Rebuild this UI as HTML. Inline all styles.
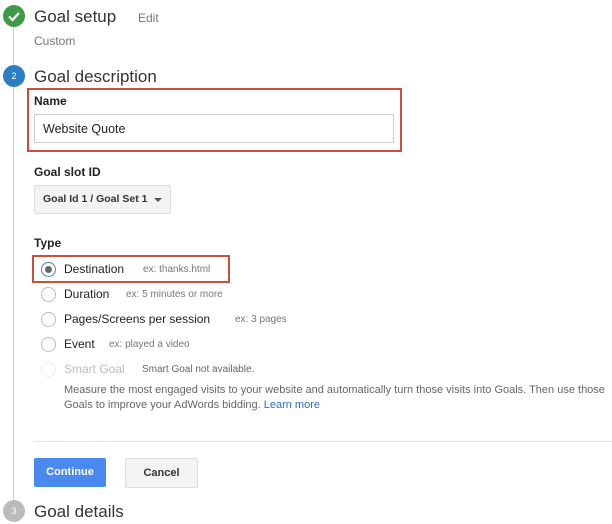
<!DOCTYPE html>
<html><head><style>
body{margin:0;width:612px;height:524px;background:#fff;font-family:"Liberation Sans",Arial,sans-serif;position:relative;overflow:hidden;color:#212121}
.a{position:absolute;white-space:nowrap}
.c{position:absolute;width:22px;height:22px;border-radius:50%;color:#fff;font-size:9px;text-align:center;line-height:22px}
.h{font-size:17px;color:#333}
.lb{font-size:12px;font-weight:bold;color:#222}
.r{position:absolute;width:13px;height:13px;border:1px solid #bbb;border-radius:50%;background:#fff}
.t{font-size:12px;color:#222}
.ex{font-size:10px;color:#777}
</style></head><body>
<div class="a" style="left:13px;top:20px;width:1px;height:490px;background:#ccc"></div>
<div class="c" style="left:3px;top:5px;background:#3e9a46"><svg width="22" height="22" viewBox="0 0 22 22"><path d="M6 11.5l3.5 3.5 6.5-7" stroke="#fff" stroke-width="2.2" fill="none"/></svg></div>
<div class="a h" style="left:34px;top:7px">Goal setup</div>
<div class="a" style="left:138px;top:11px;font-size:12px;color:#777">Edit</div>
<div class="a" style="left:34px;top:34px;font-size:12px;color:#777">Custom</div>
<div class="c" style="left:3px;top:65px;background:#2a7ec1">2</div>
<div class="a h" style="left:34px;top:67px">Goal description</div>
<div class="a" style="left:27px;top:88px;width:371px;height:60px;border:2px solid #c9503a"></div>
<div class="a lb" style="left:34px;top:94px">Name</div>
<div class="a" style="left:34px;top:114px;width:358px;height:27px;border:1px solid #ccc"></div>
<div class="a t" style="left:43px;top:122px;font-size:12.5px">Website Quote</div>
<div class="a lb" style="left:34px;top:165px">Goal slot ID</div>
<div class="a" style="left:34px;top:185px;width:135px;height:27px;border:1px solid #ddd;background:#f3f3f3;border-radius:2px"></div>
<div class="a" style="left:43px;top:193px;font-size:10.5px;font-weight:bold;color:#333">Goal Id 1 / Goal Set 1</div>
<div class="a" style="left:154px;top:198px;width:0;height:0;border-left:4px solid transparent;border-right:4px solid transparent;border-top:4px solid #555"></div>
<div class="a lb" style="left:34px;top:236px">Type</div>
<div class="a" style="left:32px;top:255px;width:194px;height:24px;border:2px solid #c9503a"></div>
<div class="r" style="left:41px;top:262px;border-color:#4a7fc7"><div style="position:absolute;left:3px;top:3px;width:7px;height:7px;border-radius:50%;background:#666"></div></div>
<div class="a t" style="left:64px;top:262px">Destination</div><div class="a ex" style="left:143px;top:264px">ex: thanks.html</div>
<div class="r" style="left:41px;top:287px"></div>
<div class="a t" style="left:64px;top:287px">Duration</div><div class="a ex" style="left:126px;top:289px">ex: 5 minutes or more</div>
<div class="r" style="left:41px;top:312px"></div>
<div class="a t" style="left:64px;top:312px">Pages/Screens per session</div><div class="a ex" style="left:235px;top:314px">ex: 3 pages</div>
<div class="r" style="left:41px;top:337px"></div>
<div class="a t" style="left:64px;top:337px">Event</div><div class="a ex" style="left:109px;top:339px">ex: played a video</div>
<div class="r" style="left:41px;top:362px;border-color:#eee"></div>
<div class="a t" style="left:64px;top:362px;color:#bbb">Smart Goal</div><div class="a ex" style="left:142px;top:364px;color:#666">Smart Goal not available.</div>
<div class="a" style="left:64px;top:383px;font-size:11px;color:#666;line-height:15px">Measure the most engaged visits to your website and automatically turn those visits into Goals. Then use those<br>Goals to improve your AdWords bidding. <span style="color:#2a6fb8">Learn more</span></div>
<div class="a" style="left:34px;top:441px;width:578px;height:1px;background:#e3e3e3"></div>
<div class="a" style="left:34px;top:458px;width:72px;height:29px;background:#4a8af0;border-radius:2px;color:#fff;font-size:11px;font-weight:bold;text-align:center;line-height:29px">Continue</div>
<div class="a" style="left:125px;top:458px;width:71px;height:28px;background:#f3f3f3;border:1px solid #ddd;border-radius:2px;color:#333;font-size:11px;font-weight:bold;text-align:center;line-height:28px">Cancel</div>
<div class="c" style="left:3px;top:500px;background:#bbb">3</div>
<div class="a h" style="left:34px;top:502px">Goal details</div>
</body></html>
